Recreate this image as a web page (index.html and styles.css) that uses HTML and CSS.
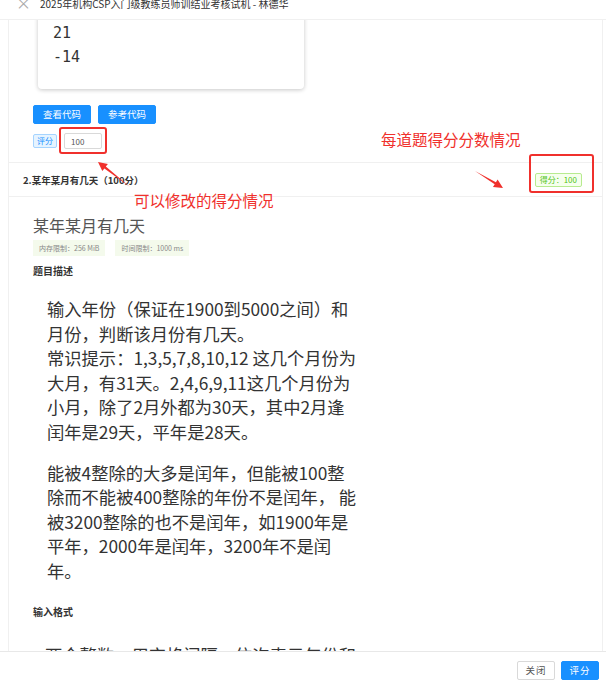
FILE: index.html
```html
<!DOCTYPE html>
<html lang="zh-CN">
  <head>
    <meta charset="UTF-8" />
    <meta name="viewport" content="width=device-width, initial-scale=1.0" />
    <title>阅卷</title>
    <link rel="stylesheet" href="styles.css">
  </head>
  <body>
    <div class="dialog">
      <div class="dialog-header">
        <span class="close">×</span>
        <span class="dialog-title">2025年机构CSP入门级教练员师训结业考核试机 - 林德华</span>
      </div>

      <div class="dialog-body">
        <div class="panel">
          <div class="answer">
            <pre class="code-box">21
-14</pre>
            <div class="btn-row">
              <button class="btn btn-primary">查看代码</button>
              <button class="btn btn-primary">参考代码</button>
            </div>
            <div class="score-row">
              <span class="tag tag-blue">评分</span>
              <input class="score-input" type="text" value="100" />
            </div>
          </div>

          <div class="question-head">
            <span class="question-title">2.某年某月有几天（100分）</span>
            <span class="tag tag-green">得分：100</span>
          </div>

          <div class="problem">
            <h3 class="problem-name">某年某月有几天</h3>
            <div class="limits">
              <span class="limit">内存限制：256 MiB</span>
              <span class="limit">时间限制：1000 ms</span>
            </div>

            <h4 class="section-title">题目描述</h4>
            <div class="statement">
              <p>输入年份（保证在1900到5000之间）和<br>月份，判断该月份有几天。<br>常识提示：1,3,5,7,8,10,12 这几个月份为<br>大月，有31天。2,4,6,9,11这几个月份为<br>小月，除了2月外都为30天，其中2月逢<br>闰年是29天，平年是28天。</p>
              <p>能被4整除的大多是闰年，但能被100整<br>除而不能被400整除的年份不是闰年， 能<br>被3200整除的也不是闰年，如1900年是<br>平年，2000年是闰年，3200年不是闰<br>年。</p>
            </div>

            <h4 class="section-title section-gap">输入格式</h4>
            <div class="statement statement-input">
              <p>两个整数，用空格间隔，依次表示年份和<br>月份。</p>
            </div>
          </div>
        </div>
      </div>

      <div class="dialog-footer">
        <button class="btn btn-default">关闭</button>
        <button class="btn btn-primary">评分</button>
      </div>
    </div>

    <!-- red annotations drawn on top of the screenshot -->
    <div class="notes">
      <span class="note note-edit">可以修改的得分情况</span>
      <span class="note note-score">每道题得分分数情况</span>
      <svg class="note-marks" width="606" height="683" viewBox="0 0 606 683">
        <rect x="60" y="128" width="46" height="25" rx="2" fill="none" stroke="#f0302c" stroke-width="2" />
        <rect x="530" y="155" width="63" height="37" rx="2" fill="none" stroke="#f0302c" stroke-width="2" />
        <polygon points="130,187 105.8,166.6 107.9,164 98,162 102.3,171.1 104.4,168.5" fill="#f0302c" />
        <polygon points="475,171 494.7,184.3 493,187.1 503,188 497.6,179.5 495.9,182.3" fill="#f0302c" />
      </svg>
    </div>
  </body>
</html>
```

FILE: styles.css
```css
* {
  box-sizing: border-box;
}
body {
  margin: 0;
  background: #fff;
  font-family: "Noto Sans CJK SC", "Noto Sans", sans-serif;
  color: #333;
}
.dialog {
  display: flex;
  flex-direction: column;
  height: 683px;
  overflow: hidden;
}

/* header, scrolled so only the lower half shows */
.dialog-header {
  height: 20px;
  flex-shrink: 0;
  display: flex;
  align-items: flex-start;
  gap: 9px;
  padding-left: 16px;
  border-bottom: 1px solid #f0f0f0;
  overflow: hidden;
}
.close {
  margin-top: -7px;
  font-size: 15px;
  line-height: 20px;
  color: #aaa;
}
.dialog-title {
  margin-top: -5px;
  font-size: 10px;
  line-height: 18px;
  color: #333;
}

.dialog-body {
  flex: 1;
  overflow: hidden;
  padding: 0 3px 0 8px;
}
.panel {
  min-height: 100%;
  border-left: 1px solid #f0f0f0;
  border-right: 1px solid #f0f0f0;
}

/* answer block of question 1 */
.answer {
  padding: 0 0 13px 24px;
  border-bottom: 1px solid #f0f0f0;
}
.code-box {
  margin: -10px 0 0 5px;
  width: 266px;
  padding: 11px 15px 20px;
  font-family: "DejaVu Sans Mono", monospace;
  font-size: 15px;
  line-height: 24px;
  color: #333;
  background: #fff;
  border-radius: 4px;
  box-shadow: 0 1px 4px rgba(0, 0, 0, 0.22);
}
.btn-row {
  display: flex;
  gap: 7px;
  margin-top: 16px;
}
.btn {
  height: 19px;
  padding: 0 9px;
  font-family: inherit;
  font-size: 9.5px;
  line-height: 17px;
  border-radius: 2px;
  border: 1px solid #d9d9d9;
  background: #fff;
  color: #555;
  cursor: pointer;
}
.btn-primary {
  background: #1890ff;
  border-color: #1890ff;
  color: #fff;
}
.score-row {
  display: flex;
  align-items: center;
  gap: 7px;
  margin-top: 9px;
}
.tag {
  display: inline-block;
  font-size: 8px;
  line-height: 10px;
  padding: 1px 3px;
  border-radius: 2px;
  border: 1px solid;
}
.tag-blue {
  color: #1890ff;
  background: #e6f4ff;
  border-color: #a6d4ff;
}
.tag-green {
  color: #52c41a;
  background: #f6ffed;
  border-color: #b7eb8f;
  padding: 1px 4px;
}
.score-input {
  width: 38px;
  height: 16px;
  padding: 0 6px;
  font-family: inherit;
  font-size: 8px;
  color: #555;
  border: 1px solid #d9d9d9;
  border-radius: 2px;
  outline: none;
}

/* question 2 */
.question-head {
  display: flex;
  justify-content: space-between;
  align-items: center;
  height: 34px;
  padding: 0 20px 0 14px;
  border-bottom: 1px solid #f0f0f0;
}
.question-title {
  font-size: 9.5px;
  font-weight: bold;
  color: #333;
}
.problem {
  padding-left: 24px;
}
.problem-name {
  margin: 17px 0 0;
  font-size: 16px;
  line-height: 22px;
  font-weight: normal;
  color: #555;
}
.limits {
  display: flex;
  gap: 10px;
  margin-top: 4px;
}
.limit {
  height: 16px;
  padding: 0 6px;
  font-size: 7px;
  line-height: 16px;
  color: #888;
  background: #f4faec;
}
.section-title {
  margin: 8px 0 0;
  font-size: 10px;
  line-height: 14px;
  font-weight: bold;
  color: #333;
}
.section-gap {
  margin-top: 21px;
}
.statement {
  padding-left: 14px;
  margin-top: 19px;
}
.statement p {
  margin: 0 0 16px;
  font-size: 17.3px;
  line-height: 24.6px;
  color: #333;
  white-space: nowrap;
}
.statement-input {
  margin-top: 24px;
  padding-left: 12px;
}

.dialog-footer {
  height: 32px;
  flex-shrink: 0;
  display: flex;
  justify-content: flex-end;
  align-items: flex-start;
  gap: 6px;
  padding: 9px 7px 0 0;
  border-top: 1px solid #e8e8e8;
  background: #fff;
}
.dialog-footer .btn {
  width: 38px;
  padding: 0;
  letter-spacing: 1px;
}

/* annotation layer */
.notes {
  position: absolute;
  top: 0;
  left: 0;
  width: 606px;
  height: 683px;
  pointer-events: none;
}
.note-marks {
  position: absolute;
  top: 0;
  left: 0;
}
.note {
  position: absolute;
  font-size: 15.5px;
  line-height: 18px;
  color: #f0302c;
  white-space: nowrap;
}
.note-edit {
  left: 134px;
  top: 191px;
}
.note-score {
  left: 381px;
  top: 130px;
}
```
